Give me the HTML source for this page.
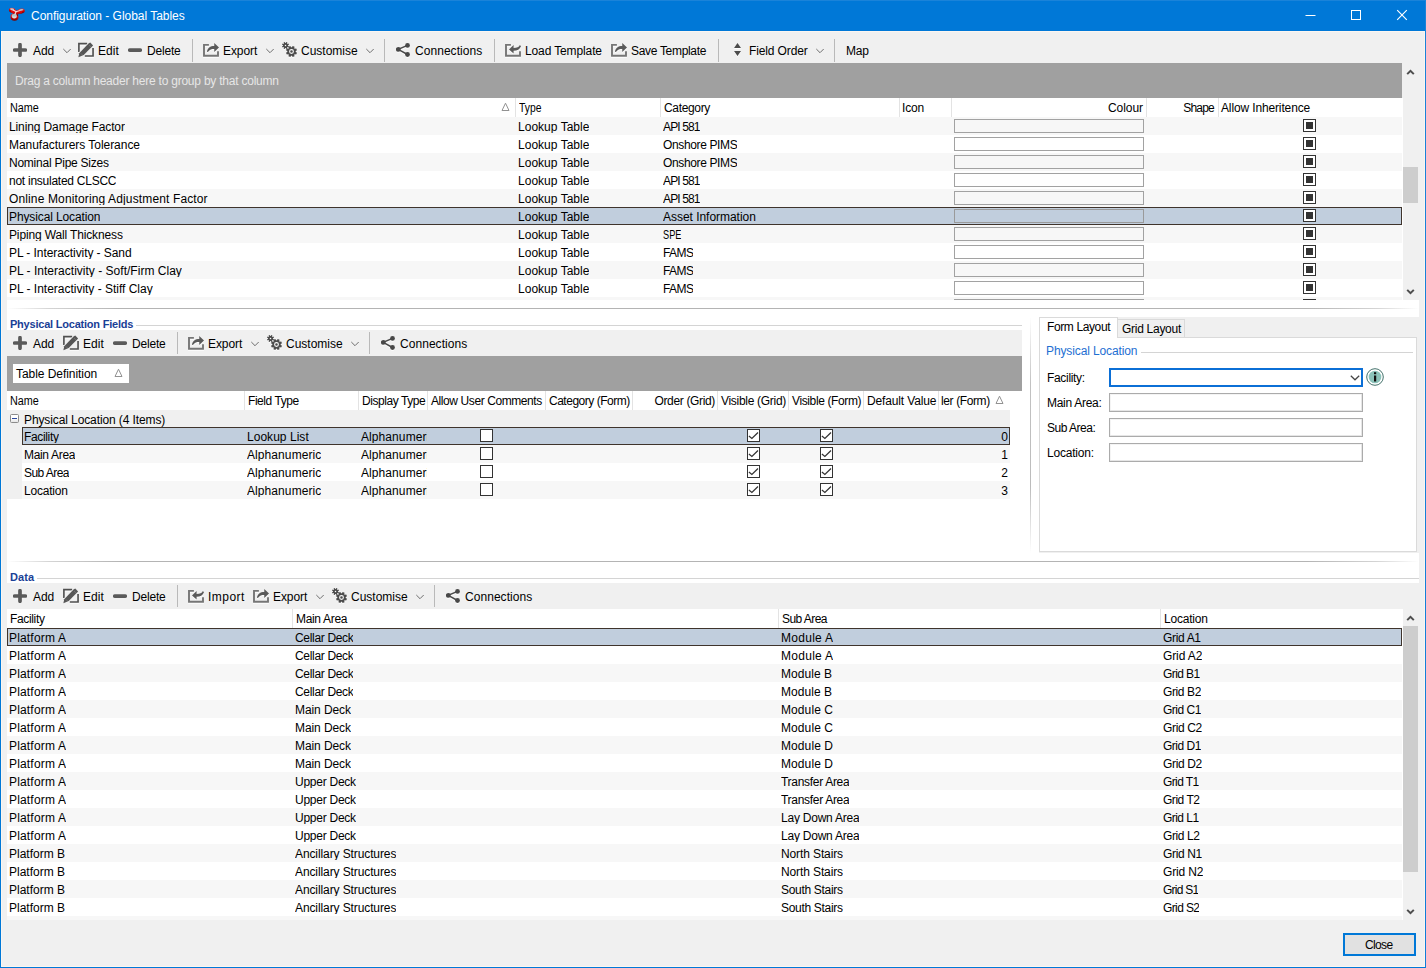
<!DOCTYPE html><html><head><meta charset="utf-8"><title>Configuration - Global Tables</title><style>
*{box-sizing:border-box;margin:0;padding:0}
html,body{width:1426px;height:968px;overflow:hidden}
body{position:relative;background:#f0f0f0;font-family:"Liberation Sans",sans-serif;font-size:12px;color:#000;line-height:18px}
.a{position:absolute}
.t{position:absolute;white-space:nowrap;height:18px;line-height:18px}
.w{color:#fff}
.c{height:15px;overflow:hidden}
.row{position:absolute;left:0;height:18px}
.alt{background:#f7f7f7}
.wh{background:#fff}
.sel{background:#c1cedd;border:1px solid #3f342c}
.vsep{position:absolute;width:1px;background:#e3e3e3}
.tsep{position:absolute;width:1px;background:#b9b9b9}
.sec{color:#1a4096;font-weight:bold;font-size:11px}
.ic{position:absolute}
</style></head><body>
<div class="a" style="left:0px;top:0px;width:1426px;height:31px;background:#0078d7"></div>
<div class="a" style="left:0px;top:31px;width:1px;height:937px;background:#0078d7"></div>
<div class="a" style="left:1425px;top:31px;width:1px;height:937px;background:#0078d7"></div>
<div class="a" style="left:0px;top:967px;width:1426px;height:1px;background:#0078d7"></div>
<div class="a" style="left:1px;top:31px;width:1424px;height:936px;border:1px solid #fbf6f1"></div>
<div class="a" style="left:0px;top:0px;width:1426px;height:1px;background:#1a83d9"></div>
<div class="a" style="left:1425px;top:0px;width:1px;height:968px;background:linear-gradient(180deg,#1a83d9 0,#0f7dd8 100%)"></div>
<svg class="ic" style="left:8px;top:7px" width="18" height="15" viewBox="0 0 18 15"><defs><linearGradient id="rd" x1="0" y1="0" x2="0" y2="1"><stop offset="0" stop-color="#ff1a1a"/><stop offset="0.450" stop-color="#e00808"/><stop offset="1" stop-color="#6d0000"/></linearGradient><linearGradient id="gy" x1="0" y1="0" x2="0" y2="1"><stop offset="0" stop-color="#9fb0b6"/><stop offset="1" stop-color="#e4e9ea"/></linearGradient></defs><g fill="url(#rd)" stroke="none"><ellipse cx="4.200" cy="3.400" rx="3.300" ry="2.500" transform="rotate(14 4.200 3.400)"/><ellipse cx="13.300" cy="4.100" rx="3.500" ry="2.450" transform="rotate(-8 13.300 4.100)"/><ellipse cx="6.500" cy="10.100" rx="3.950" ry="3.750"/><path d="M3.500 2.200L8.500 3.600L13.500 2.600L14 6.200L10.300 7L9.800 9L4 8.500L5.500 6.400L3 5.400Z"/></g><ellipse cx="4" cy="2.300" rx="2.100" ry="1" fill="#c3ccd0" transform="rotate(14 4 2.300)"/><ellipse cx="13.300" cy="2.900" rx="2.200" ry="0.950" fill="#b4bfc4" transform="rotate(-8 13.300 2.900)"/><ellipse cx="6.300" cy="9.100" rx="2.600" ry="2.350" fill="url(#gy)"/><path d="M5.500 3.200L8.100 4.700L11.300 3.700M8.100 4.700L7 7.200" stroke="#f6dada" stroke-width="1.200" stroke-linecap="round" fill="none"/></svg>
<div class="t w" style="left:31px;top:7px;letter-spacing:-0.029px;">Configuration - Global Tables</div>
<svg class="ic" style="left:1300px;top:5px" width="120" height="22" viewBox="0 0 120 22"><path d="M5.500 10.500h10" stroke="#fff" stroke-width="1"/><rect x="51.500" y="5.500" width="9" height="9" fill="none" stroke="#fff" stroke-width="1"/><path d="M97.200 5.200l9.600 9.600M106.800 5.200l-9.600 9.600" stroke="#fff" stroke-width="1.150"/></svg>
<svg class="ic" style="left:13px;top:43px" width="14" height="14" viewBox="0 0 14 14"><path d="M7 1.700v10.600M1.700 7h10.600" stroke="#5a5a5a" stroke-width="3.700" stroke-linecap="round" fill="none"/></svg>
<div class="t " style="left:33px;top:42px;letter-spacing:-0.122px;">Add</div>
<svg class="ic" style="left:63px;top:48px" width="8" height="6" viewBox="0 0 8 6"><path d="M0.300 1L4 4.700L7.700 1" stroke="#6e6e6e" stroke-width="1" fill="none"/></svg>
<svg class="ic" style="left:78px;top:42px" width="17" height="17" viewBox="0 0 17 17"><path d="M9.200 2.600H0.900V10.600M6.800 15H15.050V7.300" stroke="#fff" stroke-width="1.600" fill="none" opacity="0.900"/><path d="M9.200 1.600H0.900V10M6.800 14H15.050V6" stroke="#505050" stroke-width="1.650" fill="none"/><path d="M10.800 1.300L12.300 0.500L15.100 3.600L5.700 12.900L0.400 15.150L1.200 11.200Z" fill="#565656" stroke="#f0f0f0" stroke-width="1.500" paint-order="stroke"/><path d="M11 3.100L12.900 4.900M2.900 11.400L4.500 13" stroke="#8c8c8c" stroke-width="0.500"/></svg>
<div class="t " style="left:98px;top:42px;letter-spacing:0.043px;">Edit</div>
<svg class="ic" style="left:128px;top:43px" width="14" height="14" viewBox="0 0 14 14"><path d="M1.900 7.100h10.200" stroke="#5a5a5a" stroke-width="3.900" stroke-linecap="round" fill="none"/></svg>
<div class="t " style="left:147px;top:42px;letter-spacing:-0.178px;">Delete</div>
<div class="tsep" style="left:192px;top:39px;height:23px"></div>
<svg class="ic" style="left:203px;top:42px" width="17" height="17" viewBox="0 0 17 17"><g transform="translate(0,1)" opacity="0.900"><path d="M5.900 2.850H1V13.800H15V9.200" stroke="#fff" stroke-width="1.900" fill="none"/><path d="M11.250 0.900L16 5.400L11.250 10V6.900C8.600 6.900 6.800 7.400 4.900 9.900L4 9.700C4.600 5.800 7.200 4 11.250 4Z" fill="#fff"/></g><path d="M5.900 2.850H1V13.800H15V9.200" stroke="#767676" stroke-width="1.900" fill="none"/><path d="M11.250 0.900L16 5.400L11.250 10V6.900C8.600 6.900 6.800 7.400 4.900 9.900L4 9.700C4.600 5.800 7.200 4 11.250 4Z" fill="#5a5a5a"/></svg>
<div class="t " style="left:223px;top:42px;letter-spacing:-0.074px;">Export</div>
<svg class="ic" style="left:266px;top:48px" width="8" height="6" viewBox="0 0 8 6"><path d="M0.300 1L4 4.700L7.700 1" stroke="#6e6e6e" stroke-width="1" fill="none"/></svg>
<svg class="ic" style="left:282px;top:42px" width="16" height="17" viewBox="0 0 16 17"><g transform="translate(0,1)" opacity="0.900"><path fill-rule="evenodd" fill="#fff" d="M13.73 9.95L15.03 10.65L14.23 12.59L12.81 12.17L12.17 12.81L12.59 14.23L10.65 15.03L9.95 13.73L9.05 13.73L8.35 15.03L6.41 14.23L6.83 12.81L6.19 12.17L4.77 12.59L3.97 10.65L5.27 9.95L5.27 9.05L3.97 8.35L4.77 6.41L6.19 6.83L6.83 6.19L6.41 4.77L8.35 3.97L9.05 5.27L9.95 5.27L10.65 3.97L12.59 4.77L12.17 6.19L12.81 6.83L14.23 6.41L15.03 8.35L13.73 9.05ZM7.05 9.50a2.45 2.45 0 1 0 4.90 0a2.45 2.45 0 1 0 -4.90 0ZM8.20 9.50a1.30 1.30 0 1 0 2.60 0a1.30 1.30 0 1 0 -2.60 0Z"/><path fill-rule="evenodd" fill="#fff" d="M5.94 3.76L6.98 4.23L6.47 5.44L5.41 5.04L5.04 5.41L5.44 6.47L4.23 6.98L3.76 5.94L3.24 5.94L2.77 6.98L1.56 6.47L1.96 5.41L1.59 5.04L0.53 5.44L0.02 4.23L1.06 3.76L1.06 3.24L0.02 2.77L0.53 1.56L1.59 1.96L1.96 1.59L1.56 0.53L2.77 0.02L3.24 1.06L3.76 1.06L4.23 0.02L5.44 0.53L5.04 1.59L5.41 1.96L6.47 1.56L6.98 2.77L5.94 3.24ZM2.75 3.50a0.75 0.75 0 1 0 1.50 0a0.75 0.75 0 1 0 -1.50 0Z"/></g><path fill-rule="evenodd" fill="#4c4c4c" d="M13.73 9.95L15.03 10.65L14.23 12.59L12.81 12.17L12.17 12.81L12.59 14.23L10.65 15.03L9.95 13.73L9.05 13.73L8.35 15.03L6.41 14.23L6.83 12.81L6.19 12.17L4.77 12.59L3.97 10.65L5.27 9.95L5.27 9.05L3.97 8.35L4.77 6.41L6.19 6.83L6.83 6.19L6.41 4.77L8.35 3.97L9.05 5.27L9.95 5.27L10.65 3.97L12.59 4.77L12.17 6.19L12.81 6.83L14.23 6.41L15.03 8.35L13.73 9.05ZM7.05 9.50a2.45 2.45 0 1 0 4.90 0a2.45 2.45 0 1 0 -4.90 0ZM8.20 9.50a1.30 1.30 0 1 0 2.60 0a1.30 1.30 0 1 0 -2.60 0Z"/><path fill-rule="evenodd" fill="#4c4c4c" d="M5.94 3.76L6.98 4.23L6.47 5.44L5.41 5.04L5.04 5.41L5.44 6.47L4.23 6.98L3.76 5.94L3.24 5.94L2.77 6.98L1.56 6.47L1.96 5.41L1.59 5.04L0.53 5.44L0.02 4.23L1.06 3.76L1.06 3.24L0.02 2.77L0.53 1.56L1.59 1.96L1.96 1.59L1.56 0.53L2.77 0.02L3.24 1.06L3.76 1.06L4.23 0.02L5.44 0.53L5.04 1.59L5.41 1.96L6.47 1.56L6.98 2.77L5.94 3.24ZM2.75 3.50a0.75 0.75 0 1 0 1.50 0a0.75 0.75 0 1 0 -1.50 0Z"/></svg>
<div class="t " style="left:301px;top:42px;letter-spacing:0.002px;">Customise</div>
<svg class="ic" style="left:366px;top:48px" width="8" height="6" viewBox="0 0 8 6"><path d="M0.300 1L4 4.700L7.700 1" stroke="#6e6e6e" stroke-width="1" fill="none"/></svg>
<div class="tsep" style="left:384px;top:39px;height:23px"></div>
<svg class="ic" style="left:396px;top:43px" width="15" height="16" viewBox="0 0 15 16"><g transform="translate(0,1)" opacity="0.900"><path d="M11.500 2.400L2.200 6.400L11.500 11.500" stroke="#fff" stroke-width="1.450" fill="none"/><circle cx="11.500" cy="2.400" r="2.400" fill="#fff"/><circle cx="2.300" cy="6.400" r="2.400" fill="#fff"/><circle cx="11.500" cy="11.500" r="2.400" fill="#fff"/></g><path d="M11.500 2.400L2.200 6.400L11.500 11.500" stroke="#484848" stroke-width="1.450" fill="none"/><circle cx="11.500" cy="2.400" r="2.400" fill="#484848"/><circle cx="2.300" cy="6.400" r="2.400" fill="#484848"/><circle cx="11.500" cy="11.500" r="2.400" fill="#484848"/></svg>
<div class="t " style="left:415px;top:42px;letter-spacing:0.050px;">Connections</div>
<div class="tsep" style="left:494px;top:39px;height:23px"></div>
<svg class="ic" style="left:505px;top:42px" width="17" height="17" viewBox="0 0 17 17"><g transform="translate(0,1)" opacity="0.900"><path d="M5.900 2.850H1V13.800H15V9.200" stroke="#fff" stroke-width="1.900" fill="none"/><path d="M8.600 3L4 7.500L8.600 11.600V8.700C12.300 8.700 14.800 7.500 16 4.200L14.900 3.100C13.800 5.400 12 6.100 8.600 6.100Z" fill="#fff"/></g><path d="M5.900 2.850H1V13.800H15V9.200" stroke="#767676" stroke-width="1.900" fill="none"/><path d="M8.600 3L4 7.500L8.600 11.600V8.700C12.300 8.700 14.800 7.500 16 4.200L14.900 3.100C13.800 5.400 12 6.100 8.600 6.100Z" fill="#5a5a5a"/></svg>
<div class="t " style="left:525px;top:42px;letter-spacing:-0.124px;">Load Template</div>
<svg class="ic" style="left:611px;top:42px" width="17" height="17" viewBox="0 0 17 17"><g transform="translate(0,1)" opacity="0.900"><path d="M5.900 2.850H1V13.800H15V9.200" stroke="#fff" stroke-width="1.900" fill="none"/><path d="M11.250 0.900L16 5.400L11.250 10V6.900C8.600 6.900 6.800 7.400 4.900 9.900L4 9.700C4.600 5.800 7.200 4 11.250 4Z" fill="#fff"/></g><path d="M5.900 2.850H1V13.800H15V9.200" stroke="#767676" stroke-width="1.900" fill="none"/><path d="M11.250 0.900L16 5.400L11.250 10V6.900C8.600 6.900 6.800 7.400 4.900 9.900L4 9.700C4.600 5.800 7.200 4 11.250 4Z" fill="#5a5a5a"/></svg>
<div class="t " style="left:631px;top:42px;letter-spacing:-0.312px;">Save Template</div>
<div class="tsep" style="left:718px;top:39px;height:23px"></div>
<svg class="ic" style="left:733px;top:42px" width="9" height="16" viewBox="0 0 9 16"><g transform="translate(0,1)" opacity="0.900"><path d="M4.500 0.900L8 5.950H1.050ZM4.500 13.900L8 8.950H1.050Z" fill="#fff"/></g><path d="M4.500 0.900L8 5.950H1.050ZM4.500 13.900L8 8.950H1.050Z" fill="#4c4c4c"/></svg>
<div class="t " style="left:749px;top:42px;letter-spacing:-0.122px;">Field Order</div>
<svg class="ic" style="left:816px;top:48px" width="8" height="6" viewBox="0 0 8 6"><path d="M0.300 1L4 4.700L7.700 1" stroke="#6e6e6e" stroke-width="1" fill="none"/></svg>
<div class="tsep" style="left:834px;top:39px;height:23px"></div>
<div class="t " style="left:846px;top:42px;letter-spacing:-0.272px;">Map</div>
<div class="a" style="left:7px;top:63px;width:1395px;height:35px;background:#a0a0a0"></div>
<div class="t " style="left:15px;top:72px;letter-spacing:-0.226px;color:#e6e6e6">Drag a column header here to group by that column</div>
<div class="a" style="left:7px;top:98px;width:1396px;height:202px;background:#fff"></div>
<div class="vsep" style="left:515px;top:98px;height:19px"></div>
<div class="vsep" style="left:660px;top:98px;height:19px"></div>
<div class="vsep" style="left:899px;top:98px;height:19px"></div>
<div class="vsep" style="left:951px;top:98px;height:19px"></div>
<div class="vsep" style="left:1146px;top:98px;height:19px"></div>
<div class="vsep" style="left:1218px;top:98px;height:19px"></div>
<svg class="ic" style="left:501px;top:102px" width="9" height="10" viewBox="0 0 9 10"><path d="M4.500 1.200L8 8.500H1z" fill="none" stroke="#929292" stroke-width="1"/></svg>
<div class="t " style="left:10px;top:99px;transform:scaleX(0.900);transform-origin:0 0;">Name</div>
<div class="t " style="left:519px;top:99px;transform:scaleX(0.862);transform-origin:0 0;">Type</div>
<div class="t " style="left:664px;top:99px;letter-spacing:-0.341px;">Category</div>
<div class="t " style="left:902px;top:99px;letter-spacing:-0.191px;">Icon</div>
<div class="t " style="right:283px;top:99px;letter-spacing:-0.052px;">Colour</div>
<div class="t " style="right:212px;top:99px;letter-spacing:-0.772px;">Shape</div>
<div class="t " style="left:1221px;top:99px;letter-spacing:-0.136px;">Allow Inheritence</div>
<div class="row alt" style="left:7px;top:117px;width:1395px"></div>
<div class="t c" style="left:9px;top:118px;letter-spacing:-0.113px;">Lining Damage Factor</div>
<div class="t c" style="left:518px;top:118px;letter-spacing:0.022px;">Lookup Table</div>
<div class="t c" style="left:663px;top:118px;letter-spacing:-0.862px;">API 581</div>
<div class="a" style="left:954px;top:119px;width:190px;height:14px;border:1px solid #a2a2a2;background:#f7f7f7"></div>
<div class="a" style="left:1303px;top:119px;width:13px;height:13px;border:1px solid #333;background:#fff"><div class="a" style="left:2px;top:2px;width:7px;height:7px;background:#333"></div></div>
<div class="row wh" style="left:7px;top:135px;width:1395px"></div>
<div class="t c" style="left:9px;top:136px;letter-spacing:-0.038px;">Manufacturers Tolerance</div>
<div class="t c" style="left:518px;top:136px;letter-spacing:0.022px;">Lookup Table</div>
<div class="t c" style="left:663px;top:136px;letter-spacing:-0.361px;">Onshore PIMS</div>
<div class="a" style="left:954px;top:137px;width:190px;height:14px;border:1px solid #a2a2a2;background:#fff"></div>
<div class="a" style="left:1303px;top:137px;width:13px;height:13px;border:1px solid #333;background:#fff"><div class="a" style="left:2px;top:2px;width:7px;height:7px;background:#333"></div></div>
<div class="row alt" style="left:7px;top:153px;width:1395px"></div>
<div class="t c" style="left:9px;top:154px;letter-spacing:-0.238px;">Nominal Pipe Sizes</div>
<div class="t c" style="left:518px;top:154px;letter-spacing:0.022px;">Lookup Table</div>
<div class="t c" style="left:663px;top:154px;letter-spacing:-0.361px;">Onshore PIMS</div>
<div class="a" style="left:954px;top:155px;width:190px;height:14px;border:1px solid #a2a2a2;background:#f7f7f7"></div>
<div class="a" style="left:1303px;top:155px;width:13px;height:13px;border:1px solid #333;background:#fff"><div class="a" style="left:2px;top:2px;width:7px;height:7px;background:#333"></div></div>
<div class="row wh" style="left:7px;top:171px;width:1395px"></div>
<div class="t c" style="left:9px;top:172px;letter-spacing:-0.253px;">not insulated CLSCC</div>
<div class="t c" style="left:518px;top:172px;letter-spacing:0.022px;">Lookup Table</div>
<div class="t c" style="left:663px;top:172px;letter-spacing:-0.862px;">API 581</div>
<div class="a" style="left:954px;top:173px;width:190px;height:14px;border:1px solid #a2a2a2;background:#fff"></div>
<div class="a" style="left:1303px;top:173px;width:13px;height:13px;border:1px solid #333;background:#fff"><div class="a" style="left:2px;top:2px;width:7px;height:7px;background:#333"></div></div>
<div class="row alt" style="left:7px;top:189px;width:1395px"></div>
<div class="t c" style="left:9px;top:190px;letter-spacing:0.133px;">Online Monitoring Adjustment Factor</div>
<div class="t c" style="left:518px;top:190px;letter-spacing:0.022px;">Lookup Table</div>
<div class="t c" style="left:663px;top:190px;letter-spacing:-0.862px;">API 581</div>
<div class="a" style="left:954px;top:191px;width:190px;height:14px;border:1px solid #a2a2a2;background:#f7f7f7"></div>
<div class="a" style="left:1303px;top:191px;width:13px;height:13px;border:1px solid #333;background:#fff"><div class="a" style="left:2px;top:2px;width:7px;height:7px;background:#333"></div></div>
<div class="row sel" style="left:7px;top:207px;width:1395px"></div>
<div class="t c" style="left:9px;top:208px;letter-spacing:-0.117px;">Physical Location</div>
<div class="t c" style="left:518px;top:208px;letter-spacing:0.022px;">Lookup Table</div>
<div class="t c" style="left:663px;top:208px;letter-spacing:-0.034px;">Asset Information</div>
<div class="a" style="left:954px;top:209px;width:190px;height:14px;border:1px solid #9a9a9a;background:#c1cedd"></div>
<div class="a" style="left:1303px;top:209px;width:13px;height:13px;border:1px solid #333;background:#fff"><div class="a" style="left:2px;top:2px;width:7px;height:7px;background:#333"></div></div>
<div class="row alt" style="left:7px;top:225px;width:1395px"></div>
<div class="t c" style="left:9px;top:226px;letter-spacing:-0.141px;">Piping Wall Thickness</div>
<div class="t c" style="left:518px;top:226px;letter-spacing:0.022px;">Lookup Table</div>
<div class="t c" style="left:663px;top:226px;transform:scaleX(0.767);transform-origin:0 0;">SPE</div>
<div class="a" style="left:954px;top:227px;width:190px;height:14px;border:1px solid #a2a2a2;background:#f7f7f7"></div>
<div class="a" style="left:1303px;top:227px;width:13px;height:13px;border:1px solid #333;background:#fff"><div class="a" style="left:2px;top:2px;width:7px;height:7px;background:#333"></div></div>
<div class="row wh" style="left:7px;top:243px;width:1395px"></div>
<div class="t c" style="left:9px;top:244px;letter-spacing:-0.068px;">PL - Interactivity - Sand</div>
<div class="t c" style="left:518px;top:244px;letter-spacing:0.022px;">Lookup Table</div>
<div class="t c" style="left:663px;top:244px;letter-spacing:-0.591px;">FAMS</div>
<div class="a" style="left:954px;top:245px;width:190px;height:14px;border:1px solid #a2a2a2;background:#fff"></div>
<div class="a" style="left:1303px;top:245px;width:13px;height:13px;border:1px solid #333;background:#fff"><div class="a" style="left:2px;top:2px;width:7px;height:7px;background:#333"></div></div>
<div class="row alt" style="left:7px;top:261px;width:1395px"></div>
<div class="t c" style="left:9px;top:262px;letter-spacing:0.017px;">PL - Interactivity - Soft/Firm Clay</div>
<div class="t c" style="left:518px;top:262px;letter-spacing:0.022px;">Lookup Table</div>
<div class="t c" style="left:663px;top:262px;letter-spacing:-0.591px;">FAMS</div>
<div class="a" style="left:954px;top:263px;width:190px;height:14px;border:1px solid #a2a2a2;background:#f7f7f7"></div>
<div class="a" style="left:1303px;top:263px;width:13px;height:13px;border:1px solid #333;background:#fff"><div class="a" style="left:2px;top:2px;width:7px;height:7px;background:#333"></div></div>
<div class="row wh" style="left:7px;top:279px;width:1395px"></div>
<div class="t c" style="left:9px;top:280px;letter-spacing:-0.013px;">PL - Interactivity - Stiff Clay</div>
<div class="t c" style="left:518px;top:280px;letter-spacing:0.022px;">Lookup Table</div>
<div class="t c" style="left:663px;top:280px;letter-spacing:-0.591px;">FAMS</div>
<div class="a" style="left:954px;top:281px;width:190px;height:14px;border:1px solid #a2a2a2;background:#fff"></div>
<div class="a" style="left:1303px;top:281px;width:13px;height:13px;border:1px solid #333;background:#fff"><div class="a" style="left:2px;top:2px;width:7px;height:7px;background:#333"></div></div>
<div class="a" style="left:7px;top:297px;width:1396px;height:3px;background:#fff"></div>
<div class="a" style="left:7px;top:297px;width:1395px;height:3px;background:#f7f7f7"></div>
<div class="a" style="left:954px;top:299px;width:190px;height:1px;background:#a2a2a2"></div>
<div class="a" style="left:1303px;top:299px;width:13px;height:1px;background:#333"></div>
<div class="a" style="left:1403px;top:167px;width:15px;height:36px;background:#cdcdcd"></div>
<svg class="ic" style="left:1406px;top:69px" width="9" height="6" viewBox="0 0 9 6"><path d="M1.200 5.100L4.500 1.800L7.800 5.100" stroke="#4d4d4d" stroke-width="2" fill="none"/></svg>
<svg class="ic" style="left:1406px;top:289px" width="9" height="6" viewBox="0 0 9 6"><path d="M1.200 0.900L4.500 4.200L7.800 0.900" stroke="#4d4d4d" stroke-width="2" fill="none"/></svg>
<div class="a" style="left:7px;top:300px;width:1412px;height:17px;background:#fff"></div>
<div class="a" style="left:7px;top:317px;width:1033px;height:236px;background:#fff"></div>
<div class="a" style="left:7px;top:553px;width:1412px;height:30px;background:#fff"></div>
<div class="a" style="left:7px;top:308px;width:1412px;height:1px;background:linear-gradient(90deg,#fff 0,#d4d4d4 3%,#b4b4b4 8%,#b4b4b4 92%,#d4d4d4 97%,#fff 100%)"></div>
<div class="a" style="left:7px;top:561px;width:1412px;height:1px;background:linear-gradient(90deg,#fff 0,#d4d4d4 3%,#b4b4b4 8%,#b4b4b4 92%,#d4d4d4 97%,#fff 100%)"></div>
<div class="t sec" style="left:10px;top:315px;letter-spacing:-0.216px;z-index:3">Physical Location Fields</div>
<div class="a" style="left:136px;top:325px;width:886px;height:1px;background:#d4d4d4"></div>
<div class="a" style="left:7px;top:330px;width:1015px;height:26px;background:#f0f0f0"></div>
<svg class="ic" style="left:13px;top:336px" width="14" height="14" viewBox="0 0 14 14"><path d="M7 1.700v10.600M1.700 7h10.600" stroke="#5a5a5a" stroke-width="3.700" stroke-linecap="round" fill="none"/></svg>
<div class="t " style="left:33px;top:335px;letter-spacing:-0.122px;">Add</div>
<svg class="ic" style="left:63px;top:335px" width="17" height="17" viewBox="0 0 17 17"><path d="M9.200 2.600H0.900V10.600M6.800 15H15.050V7.300" stroke="#fff" stroke-width="1.600" fill="none" opacity="0.900"/><path d="M9.200 1.600H0.900V10M6.800 14H15.050V6" stroke="#505050" stroke-width="1.650" fill="none"/><path d="M10.800 1.300L12.300 0.500L15.100 3.600L5.700 12.900L0.400 15.150L1.200 11.200Z" fill="#565656" stroke="#f0f0f0" stroke-width="1.500" paint-order="stroke"/><path d="M11 3.100L12.900 4.900M2.900 11.400L4.500 13" stroke="#8c8c8c" stroke-width="0.500"/></svg>
<div class="t " style="left:83px;top:335px;letter-spacing:0.043px;">Edit</div>
<svg class="ic" style="left:113px;top:336px" width="14" height="14" viewBox="0 0 14 14"><path d="M1.900 7.100h10.200" stroke="#5a5a5a" stroke-width="3.900" stroke-linecap="round" fill="none"/></svg>
<div class="t " style="left:132px;top:335px;letter-spacing:-0.178px;">Delete</div>
<div class="tsep" style="left:177px;top:332px;height:22px"></div>
<svg class="ic" style="left:188px;top:335px" width="17" height="17" viewBox="0 0 17 17"><g transform="translate(0,1)" opacity="0.900"><path d="M5.900 2.850H1V13.800H15V9.200" stroke="#fff" stroke-width="1.900" fill="none"/><path d="M11.250 0.900L16 5.400L11.250 10V6.900C8.600 6.900 6.800 7.400 4.900 9.900L4 9.700C4.600 5.800 7.200 4 11.250 4Z" fill="#fff"/></g><path d="M5.900 2.850H1V13.800H15V9.200" stroke="#767676" stroke-width="1.900" fill="none"/><path d="M11.250 0.900L16 5.400L11.250 10V6.900C8.600 6.900 6.800 7.400 4.900 9.900L4 9.700C4.600 5.800 7.200 4 11.250 4Z" fill="#5a5a5a"/></svg>
<div class="t " style="left:208px;top:335px;letter-spacing:-0.074px;">Export</div>
<svg class="ic" style="left:251px;top:341px" width="8" height="6" viewBox="0 0 8 6"><path d="M0.300 1L4 4.700L7.700 1" stroke="#6e6e6e" stroke-width="1" fill="none"/></svg>
<svg class="ic" style="left:267px;top:335px" width="16" height="17" viewBox="0 0 16 17"><g transform="translate(0,1)" opacity="0.900"><path fill-rule="evenodd" fill="#fff" d="M13.73 9.95L15.03 10.65L14.23 12.59L12.81 12.17L12.17 12.81L12.59 14.23L10.65 15.03L9.95 13.73L9.05 13.73L8.35 15.03L6.41 14.23L6.83 12.81L6.19 12.17L4.77 12.59L3.97 10.65L5.27 9.95L5.27 9.05L3.97 8.35L4.77 6.41L6.19 6.83L6.83 6.19L6.41 4.77L8.35 3.97L9.05 5.27L9.95 5.27L10.65 3.97L12.59 4.77L12.17 6.19L12.81 6.83L14.23 6.41L15.03 8.35L13.73 9.05ZM7.05 9.50a2.45 2.45 0 1 0 4.90 0a2.45 2.45 0 1 0 -4.90 0ZM8.20 9.50a1.30 1.30 0 1 0 2.60 0a1.30 1.30 0 1 0 -2.60 0Z"/><path fill-rule="evenodd" fill="#fff" d="M5.94 3.76L6.98 4.23L6.47 5.44L5.41 5.04L5.04 5.41L5.44 6.47L4.23 6.98L3.76 5.94L3.24 5.94L2.77 6.98L1.56 6.47L1.96 5.41L1.59 5.04L0.53 5.44L0.02 4.23L1.06 3.76L1.06 3.24L0.02 2.77L0.53 1.56L1.59 1.96L1.96 1.59L1.56 0.53L2.77 0.02L3.24 1.06L3.76 1.06L4.23 0.02L5.44 0.53L5.04 1.59L5.41 1.96L6.47 1.56L6.98 2.77L5.94 3.24ZM2.75 3.50a0.75 0.75 0 1 0 1.50 0a0.75 0.75 0 1 0 -1.50 0Z"/></g><path fill-rule="evenodd" fill="#4c4c4c" d="M13.73 9.95L15.03 10.65L14.23 12.59L12.81 12.17L12.17 12.81L12.59 14.23L10.65 15.03L9.95 13.73L9.05 13.73L8.35 15.03L6.41 14.23L6.83 12.81L6.19 12.17L4.77 12.59L3.97 10.65L5.27 9.95L5.27 9.05L3.97 8.35L4.77 6.41L6.19 6.83L6.83 6.19L6.41 4.77L8.35 3.97L9.05 5.27L9.95 5.27L10.65 3.97L12.59 4.77L12.17 6.19L12.81 6.83L14.23 6.41L15.03 8.35L13.73 9.05ZM7.05 9.50a2.45 2.45 0 1 0 4.90 0a2.45 2.45 0 1 0 -4.90 0ZM8.20 9.50a1.30 1.30 0 1 0 2.60 0a1.30 1.30 0 1 0 -2.60 0Z"/><path fill-rule="evenodd" fill="#4c4c4c" d="M5.94 3.76L6.98 4.23L6.47 5.44L5.41 5.04L5.04 5.41L5.44 6.47L4.23 6.98L3.76 5.94L3.24 5.94L2.77 6.98L1.56 6.47L1.96 5.41L1.59 5.04L0.53 5.44L0.02 4.23L1.06 3.76L1.06 3.24L0.02 2.77L0.53 1.56L1.59 1.96L1.96 1.59L1.56 0.53L2.77 0.02L3.24 1.06L3.76 1.06L4.23 0.02L5.44 0.53L5.04 1.59L5.41 1.96L6.47 1.56L6.98 2.77L5.94 3.24ZM2.75 3.50a0.75 0.75 0 1 0 1.50 0a0.75 0.75 0 1 0 -1.50 0Z"/></svg>
<div class="t " style="left:286px;top:335px;letter-spacing:0.002px;">Customise</div>
<svg class="ic" style="left:351px;top:341px" width="8" height="6" viewBox="0 0 8 6"><path d="M0.300 1L4 4.700L7.700 1" stroke="#6e6e6e" stroke-width="1" fill="none"/></svg>
<div class="tsep" style="left:369px;top:332px;height:22px"></div>
<svg class="ic" style="left:381px;top:336px" width="15" height="16" viewBox="0 0 15 16"><g transform="translate(0,1)" opacity="0.900"><path d="M11.500 2.400L2.200 6.400L11.500 11.500" stroke="#fff" stroke-width="1.450" fill="none"/><circle cx="11.500" cy="2.400" r="2.400" fill="#fff"/><circle cx="2.300" cy="6.400" r="2.400" fill="#fff"/><circle cx="11.500" cy="11.500" r="2.400" fill="#fff"/></g><path d="M11.500 2.400L2.200 6.400L11.500 11.500" stroke="#484848" stroke-width="1.450" fill="none"/><circle cx="11.500" cy="2.400" r="2.400" fill="#484848"/><circle cx="2.300" cy="6.400" r="2.400" fill="#484848"/><circle cx="11.500" cy="11.500" r="2.400" fill="#484848"/></svg>
<div class="t " style="left:400px;top:335px;letter-spacing:0.050px;">Connections</div>
<div class="a" style="left:7px;top:356px;width:1015px;height:35px;background:#a0a0a0"></div>
<div class="a" style="left:13px;top:364px;width:116px;height:19px;background:#fff"></div>
<div class="t " style="left:16px;top:365px;letter-spacing:-0.053px;line-height:19px;height:19px;">Table Definition</div>
<svg class="ic" style="left:114px;top:368px" width="9" height="10" viewBox="0 0 9 10"><path d="M4.500 1.200L8 8.500H1z" fill="none" stroke="#929292" stroke-width="1"/></svg>
<div class="a" style="left:7px;top:391px;width:1015px;height:19px;background:#fff"></div>
<div class="vsep" style="left:244px;top:391px;height:19px"></div>
<div class="vsep" style="left:358px;top:391px;height:19px"></div>
<div class="vsep" style="left:427px;top:391px;height:19px"></div>
<div class="vsep" style="left:545px;top:391px;height:19px"></div>
<div class="vsep" style="left:632px;top:391px;height:19px"></div>
<div class="vsep" style="left:717px;top:391px;height:19px"></div>
<div class="vsep" style="left:788px;top:391px;height:19px"></div>
<div class="vsep" style="left:863px;top:391px;height:19px"></div>
<div class="vsep" style="left:938px;top:391px;height:19px"></div>
<div class="t " style="left:10px;top:392px;transform:scaleX(0.900);transform-origin:0 0;">Name</div>
<div class="t " style="left:248px;top:392px;letter-spacing:-0.449px;">Field Type</div>
<div class="t " style="left:362px;top:392px;letter-spacing:-0.435px;">Display Type</div>
<div class="t " style="left:431px;top:392px;letter-spacing:-0.411px;">Allow User Comments</div>
<div class="t " style="left:549px;top:392px;letter-spacing:-0.487px;">Category (Form)</div>
<div class="t " style="right:711px;top:392px;letter-spacing:-0.343px;">Order (Grid)</div>
<div class="t " style="left:721px;top:392px;letter-spacing:-0.295px;">Visible (Grid)</div>
<div class="t " style="left:792px;top:392px;letter-spacing:-0.382px;">Visible (Form)</div>
<div class="t " style="left:867px;top:392px;letter-spacing:-0.137px;">Default Value</div>
<div class="t " style="left:941px;top:392px;letter-spacing:-0.386px;">ler (Form)</div>
<svg class="ic" style="left:995px;top:395px" width="9" height="10" viewBox="0 0 9 10"><path d="M4.500 1.200L8 8.500H1z" fill="none" stroke="#929292" stroke-width="1"/></svg>
<div class="a" style="left:7px;top:410px;width:1003px;height:17px;background:#f0f0f0"></div>
<div class="a" style="left:10px;top:414px;width:9px;height:9px;border:1px solid #8c8c8c;border-radius:1.500px;background:linear-gradient(180deg,#fff 0,#fff 45%,#e6e6e6 100%)"><div class="a" style="left:1px;top:3px;width:5px;height:1px;background:#2b479e"></div></div>
<div class="t " style="left:24px;top:412px;letter-spacing:-0.105px;height:17px;line-height:17px">Physical Location (4 Items)</div>
<div class="a" style="left:7px;top:427px;width:15px;height:18px;background:#f0f0f0"></div>
<div class="row sel" style="left:22px;top:427px;width:988px"></div>
<div class="t c" style="left:24px;top:428px;letter-spacing:-0.349px;">Facility</div>
<div class="t c" style="left:247px;top:428px;letter-spacing:0.034px;">Lookup List</div>
<div class="t c" style="left:361px;top:428px;letter-spacing:0.084px;width:66px">Alphanumeric</div>
<div class="a" style="left:480px;top:429px;width:13px;height:13px;border:1px solid #333;background:#fff"></div>
<div class="a" style="left:747px;top:429px;width:13px;height:13px;border:1px solid #333;background:#fff"></div>
<svg class="ic" style="left:747px;top:429px" width="13" height="13" viewBox="0 0 13 13"><path d="M1.900 6.900L4.900 9.400L11 3.500" stroke="#333" stroke-width="1.250" fill="none"/></svg>
<div class="a" style="left:820px;top:429px;width:13px;height:13px;border:1px solid #333;background:#fff"></div>
<svg class="ic" style="left:820px;top:429px" width="13" height="13" viewBox="0 0 13 13"><path d="M1.900 6.900L4.900 9.400L11 3.500" stroke="#333" stroke-width="1.250" fill="none"/></svg>
<div class="t " style="right:418px;top:428px;">0</div>
<div class="a" style="left:7px;top:445px;width:15px;height:18px;background:#f0f0f0"></div>
<div class="row alt" style="left:22px;top:445px;width:988px"></div>
<div class="t c" style="left:24px;top:446px;letter-spacing:-0.329px;">Main Area</div>
<div class="t c" style="left:247px;top:446px;letter-spacing:0.084px;">Alphanumeric</div>
<div class="t c" style="left:361px;top:446px;letter-spacing:0.084px;width:66px">Alphanumeric</div>
<div class="a" style="left:480px;top:447px;width:13px;height:13px;border:1px solid #333;background:#fff"></div>
<div class="a" style="left:747px;top:447px;width:13px;height:13px;border:1px solid #333;background:#fff"></div>
<svg class="ic" style="left:747px;top:447px" width="13" height="13" viewBox="0 0 13 13"><path d="M1.900 6.900L4.900 9.400L11 3.500" stroke="#333" stroke-width="1.250" fill="none"/></svg>
<div class="a" style="left:820px;top:447px;width:13px;height:13px;border:1px solid #333;background:#fff"></div>
<svg class="ic" style="left:820px;top:447px" width="13" height="13" viewBox="0 0 13 13"><path d="M1.900 6.900L4.900 9.400L11 3.500" stroke="#333" stroke-width="1.250" fill="none"/></svg>
<div class="t " style="right:418px;top:446px;">1</div>
<div class="a" style="left:7px;top:463px;width:15px;height:18px;background:#f0f0f0"></div>
<div class="row wh" style="left:22px;top:463px;width:988px"></div>
<div class="t c" style="left:24px;top:464px;letter-spacing:-0.551px;">Sub Area</div>
<div class="t c" style="left:247px;top:464px;letter-spacing:0.084px;">Alphanumeric</div>
<div class="t c" style="left:361px;top:464px;letter-spacing:0.084px;width:66px">Alphanumeric</div>
<div class="a" style="left:480px;top:465px;width:13px;height:13px;border:1px solid #333;background:#fff"></div>
<div class="a" style="left:747px;top:465px;width:13px;height:13px;border:1px solid #333;background:#fff"></div>
<svg class="ic" style="left:747px;top:465px" width="13" height="13" viewBox="0 0 13 13"><path d="M1.900 6.900L4.900 9.400L11 3.500" stroke="#333" stroke-width="1.250" fill="none"/></svg>
<div class="a" style="left:820px;top:465px;width:13px;height:13px;border:1px solid #333;background:#fff"></div>
<svg class="ic" style="left:820px;top:465px" width="13" height="13" viewBox="0 0 13 13"><path d="M1.900 6.900L4.900 9.400L11 3.500" stroke="#333" stroke-width="1.250" fill="none"/></svg>
<div class="t " style="right:418px;top:464px;">2</div>
<div class="a" style="left:7px;top:481px;width:15px;height:18px;background:#f0f0f0"></div>
<div class="row alt" style="left:22px;top:481px;width:988px"></div>
<div class="t c" style="left:24px;top:482px;letter-spacing:-0.208px;">Location</div>
<div class="t c" style="left:247px;top:482px;letter-spacing:0.084px;">Alphanumeric</div>
<div class="t c" style="left:361px;top:482px;letter-spacing:0.084px;width:66px">Alphanumeric</div>
<div class="a" style="left:480px;top:483px;width:13px;height:13px;border:1px solid #333;background:#fff"></div>
<div class="a" style="left:747px;top:483px;width:13px;height:13px;border:1px solid #333;background:#fff"></div>
<svg class="ic" style="left:747px;top:483px" width="13" height="13" viewBox="0 0 13 13"><path d="M1.900 6.900L4.900 9.400L11 3.500" stroke="#333" stroke-width="1.250" fill="none"/></svg>
<div class="a" style="left:820px;top:483px;width:13px;height:13px;border:1px solid #333;background:#fff"></div>
<svg class="ic" style="left:820px;top:483px" width="13" height="13" viewBox="0 0 13 13"><path d="M1.900 6.900L4.900 9.400L11 3.500" stroke="#333" stroke-width="1.250" fill="none"/></svg>
<div class="t " style="right:418px;top:482px;">3</div>
<div class="a" style="left:1030px;top:317px;width:1px;height:236px;background:linear-gradient(180deg,#fff 0,#c2c2c2 28%,#bcbcbc 72%,#fff 100%)"></div>
<div class="a" style="left:1040px;top:317px;width:1379px;height:0px;"></div>
<div class="a" style="left:1039px;top:317px;width:380px;height:236px;background:#f0f0f0"></div>
<div class="a" style="left:1039px;top:337px;width:378px;height:215px;background:#fff;border:1px solid #dadada"></div>
<div class="a" style="left:1117px;top:319px;width:68px;height:19px;background:#f0f0f0;border:1px solid #dadada;border-left:none"></div>
<div class="a" style="left:1039px;top:317px;width:79px;height:21px;background:#fff;border:1px solid #dadada;border-bottom:none"></div>
<div class="t " style="left:1047px;top:318px;letter-spacing:-0.384px;">Form Layout</div>
<div class="t " style="left:1122px;top:320px;letter-spacing:-0.282px;">Grid Layout</div>
<div class="t " style="left:1046px;top:342px;letter-spacing:-0.117px;color:#1e6fd2;">Physical Location</div>
<div class="a" style="left:1141px;top:352px;width:272px;height:1px;background:#d4d4d4"></div>
<div class="t " style="left:1047px;top:369px;letter-spacing:-0.321px;">Facility:</div>
<div class="a" style="left:1109px;top:368px;width:254px;height:19px;background:#fff;border:2px solid #0b6fd6"></div>
<svg class="ic" style="left:1350px;top:375px" width="10" height="6" viewBox="0 0 10 6"><path d="M0.800 0.800L5 4.800L9.200 0.800" stroke="#444" stroke-width="1.200" fill="none"/></svg>
<div class="t " style="left:1047px;top:394px;letter-spacing:-0.284px;">Main Area:</div>
<div class="a" style="left:1109px;top:393px;width:254px;height:19px;background:#fff;border:1px solid #ababab;box-shadow:inset -1px -1px 0 #e6e6e6, inset 1px 1px 0 #f4f4f4"></div>
<div class="t " style="left:1047px;top:419px;letter-spacing:-0.498px;">Sub Area:</div>
<div class="a" style="left:1109px;top:418px;width:254px;height:19px;background:#fff;border:1px solid #ababab;box-shadow:inset -1px -1px 0 #e6e6e6, inset 1px 1px 0 #f4f4f4"></div>
<div class="t " style="left:1047px;top:444px;letter-spacing:-0.211px;">Location:</div>
<div class="a" style="left:1109px;top:443px;width:254px;height:19px;background:#fff;border:1px solid #ababab;box-shadow:inset -1px -1px 0 #e6e6e6, inset 1px 1px 0 #f4f4f4"></div>
<svg class="ic" style="left:1366px;top:368px" width="18" height="18" viewBox="0 0 18 18"><circle cx="9" cy="9" r="8.300" fill="#fff" stroke="#44726c" stroke-width="1"/><circle cx="9" cy="9" r="6.300" fill="#8cc3ba"/><rect x="8" y="7.500" width="2.200" height="6" fill="#111"/><rect x="8" y="4.200" width="2.200" height="2" fill="#111"/></svg>
<div class="t sec" style="left:10px;top:568px;letter-spacing:0.052px;z-index:3">Data</div>
<div class="a" style="left:37px;top:578px;width:1382px;height:1px;background:#d4d4d4"></div>
<svg class="ic" style="left:13px;top:589px" width="14" height="14" viewBox="0 0 14 14"><path d="M7 1.700v10.600M1.700 7h10.600" stroke="#5a5a5a" stroke-width="3.700" stroke-linecap="round" fill="none"/></svg>
<div class="t " style="left:33px;top:588px;letter-spacing:-0.122px;">Add</div>
<svg class="ic" style="left:63px;top:588px" width="17" height="17" viewBox="0 0 17 17"><path d="M9.200 2.600H0.900V10.600M6.800 15H15.050V7.300" stroke="#fff" stroke-width="1.600" fill="none" opacity="0.900"/><path d="M9.200 1.600H0.900V10M6.800 14H15.050V6" stroke="#505050" stroke-width="1.650" fill="none"/><path d="M10.800 1.300L12.300 0.500L15.100 3.600L5.700 12.900L0.400 15.150L1.200 11.200Z" fill="#565656" stroke="#f0f0f0" stroke-width="1.500" paint-order="stroke"/><path d="M11 3.100L12.900 4.900M2.900 11.400L4.500 13" stroke="#8c8c8c" stroke-width="0.500"/></svg>
<div class="t " style="left:83px;top:588px;letter-spacing:0.043px;">Edit</div>
<svg class="ic" style="left:113px;top:589px" width="14" height="14" viewBox="0 0 14 14"><path d="M1.900 7.100h10.200" stroke="#5a5a5a" stroke-width="3.900" stroke-linecap="round" fill="none"/></svg>
<div class="t " style="left:132px;top:588px;letter-spacing:-0.178px;">Delete</div>
<div class="tsep" style="left:177px;top:585px;height:22px"></div>
<svg class="ic" style="left:188px;top:588px" width="17" height="17" viewBox="0 0 17 17"><g transform="translate(0,1)" opacity="0.900"><path d="M5.900 2.850H1V13.800H15V9.200" stroke="#fff" stroke-width="1.900" fill="none"/><path d="M8.600 3L4 7.500L8.600 11.600V8.700C12.300 8.700 14.800 7.500 16 4.200L14.900 3.100C13.800 5.400 12 6.100 8.600 6.100Z" fill="#fff"/></g><path d="M5.900 2.850H1V13.800H15V9.200" stroke="#767676" stroke-width="1.900" fill="none"/><path d="M8.600 3L4 7.500L8.600 11.600V8.700C12.300 8.700 14.800 7.500 16 4.200L14.900 3.100C13.800 5.400 12 6.100 8.600 6.100Z" fill="#5a5a5a"/></svg>
<div class="t " style="left:208px;top:588px;letter-spacing:0.460px;">Import</div>
<svg class="ic" style="left:253px;top:588px" width="17" height="17" viewBox="0 0 17 17"><g transform="translate(0,1)" opacity="0.900"><path d="M5.900 2.850H1V13.800H15V9.200" stroke="#fff" stroke-width="1.900" fill="none"/><path d="M11.250 0.900L16 5.400L11.250 10V6.900C8.600 6.900 6.800 7.400 4.900 9.900L4 9.700C4.600 5.800 7.200 4 11.250 4Z" fill="#fff"/></g><path d="M5.900 2.850H1V13.800H15V9.200" stroke="#767676" stroke-width="1.900" fill="none"/><path d="M11.250 0.900L16 5.400L11.250 10V6.900C8.600 6.900 6.800 7.400 4.900 9.900L4 9.700C4.600 5.800 7.200 4 11.250 4Z" fill="#5a5a5a"/></svg>
<div class="t " style="left:273px;top:588px;letter-spacing:-0.074px;">Export</div>
<svg class="ic" style="left:316px;top:594px" width="8" height="6" viewBox="0 0 8 6"><path d="M0.300 1L4 4.700L7.700 1" stroke="#6e6e6e" stroke-width="1" fill="none"/></svg>
<svg class="ic" style="left:332px;top:588px" width="16" height="17" viewBox="0 0 16 17"><g transform="translate(0,1)" opacity="0.900"><path fill-rule="evenodd" fill="#fff" d="M13.73 9.95L15.03 10.65L14.23 12.59L12.81 12.17L12.17 12.81L12.59 14.23L10.65 15.03L9.95 13.73L9.05 13.73L8.35 15.03L6.41 14.23L6.83 12.81L6.19 12.17L4.77 12.59L3.97 10.65L5.27 9.95L5.27 9.05L3.97 8.35L4.77 6.41L6.19 6.83L6.83 6.19L6.41 4.77L8.35 3.97L9.05 5.27L9.95 5.27L10.65 3.97L12.59 4.77L12.17 6.19L12.81 6.83L14.23 6.41L15.03 8.35L13.73 9.05ZM7.05 9.50a2.45 2.45 0 1 0 4.90 0a2.45 2.45 0 1 0 -4.90 0ZM8.20 9.50a1.30 1.30 0 1 0 2.60 0a1.30 1.30 0 1 0 -2.60 0Z"/><path fill-rule="evenodd" fill="#fff" d="M5.94 3.76L6.98 4.23L6.47 5.44L5.41 5.04L5.04 5.41L5.44 6.47L4.23 6.98L3.76 5.94L3.24 5.94L2.77 6.98L1.56 6.47L1.96 5.41L1.59 5.04L0.53 5.44L0.02 4.23L1.06 3.76L1.06 3.24L0.02 2.77L0.53 1.56L1.59 1.96L1.96 1.59L1.56 0.53L2.77 0.02L3.24 1.06L3.76 1.06L4.23 0.02L5.44 0.53L5.04 1.59L5.41 1.96L6.47 1.56L6.98 2.77L5.94 3.24ZM2.75 3.50a0.75 0.75 0 1 0 1.50 0a0.75 0.75 0 1 0 -1.50 0Z"/></g><path fill-rule="evenodd" fill="#4c4c4c" d="M13.73 9.95L15.03 10.65L14.23 12.59L12.81 12.17L12.17 12.81L12.59 14.23L10.65 15.03L9.95 13.73L9.05 13.73L8.35 15.03L6.41 14.23L6.83 12.81L6.19 12.17L4.77 12.59L3.97 10.65L5.27 9.95L5.27 9.05L3.97 8.35L4.77 6.41L6.19 6.83L6.83 6.19L6.41 4.77L8.35 3.97L9.05 5.27L9.95 5.27L10.65 3.97L12.59 4.77L12.17 6.19L12.81 6.83L14.23 6.41L15.03 8.35L13.73 9.05ZM7.05 9.50a2.45 2.45 0 1 0 4.90 0a2.45 2.45 0 1 0 -4.90 0ZM8.20 9.50a1.30 1.30 0 1 0 2.60 0a1.30 1.30 0 1 0 -2.60 0Z"/><path fill-rule="evenodd" fill="#4c4c4c" d="M5.94 3.76L6.98 4.23L6.47 5.44L5.41 5.04L5.04 5.41L5.44 6.47L4.23 6.98L3.76 5.94L3.24 5.94L2.77 6.98L1.56 6.47L1.96 5.41L1.59 5.04L0.53 5.44L0.02 4.23L1.06 3.76L1.06 3.24L0.02 2.77L0.53 1.56L1.59 1.96L1.96 1.59L1.56 0.53L2.77 0.02L3.24 1.06L3.76 1.06L4.23 0.02L5.44 0.53L5.04 1.59L5.41 1.96L6.47 1.56L6.98 2.77L5.94 3.24ZM2.75 3.50a0.75 0.75 0 1 0 1.50 0a0.75 0.75 0 1 0 -1.50 0Z"/></svg>
<div class="t " style="left:351px;top:588px;letter-spacing:0.002px;">Customise</div>
<svg class="ic" style="left:416px;top:594px" width="8" height="6" viewBox="0 0 8 6"><path d="M0.300 1L4 4.700L7.700 1" stroke="#6e6e6e" stroke-width="1" fill="none"/></svg>
<div class="tsep" style="left:434px;top:585px;height:22px"></div>
<svg class="ic" style="left:446px;top:589px" width="15" height="16" viewBox="0 0 15 16"><g transform="translate(0,1)" opacity="0.900"><path d="M11.500 2.400L2.200 6.400L11.500 11.500" stroke="#fff" stroke-width="1.450" fill="none"/><circle cx="11.500" cy="2.400" r="2.400" fill="#fff"/><circle cx="2.300" cy="6.400" r="2.400" fill="#fff"/><circle cx="11.500" cy="11.500" r="2.400" fill="#fff"/></g><path d="M11.500 2.400L2.200 6.400L11.500 11.500" stroke="#484848" stroke-width="1.450" fill="none"/><circle cx="11.500" cy="2.400" r="2.400" fill="#484848"/><circle cx="2.300" cy="6.400" r="2.400" fill="#484848"/><circle cx="11.500" cy="11.500" r="2.400" fill="#484848"/></svg>
<div class="t " style="left:465px;top:588px;letter-spacing:0.050px;">Connections</div>
<div class="a" style="left:7px;top:609px;width:1396px;height:311px;background:#fff"></div>
<div class="vsep" style="left:292px;top:609px;height:19px"></div>
<div class="vsep" style="left:778px;top:609px;height:19px"></div>
<div class="vsep" style="left:1160px;top:609px;height:19px"></div>
<div class="t " style="left:10px;top:610px;letter-spacing:-0.349px;">Facility</div>
<div class="t " style="left:296px;top:610px;letter-spacing:-0.329px;">Main Area</div>
<div class="t " style="left:782px;top:610px;letter-spacing:-0.551px;">Sub Area</div>
<div class="t " style="left:1164px;top:610px;letter-spacing:-0.208px;">Location</div>
<div class="row sel" style="left:7px;top:628px;width:1395px"></div>
<div class="t c" style="left:9px;top:629px;letter-spacing:0.173px;">Platform A</div>
<div class="t c" style="left:295px;top:629px;letter-spacing:-0.323px;">Cellar Deck</div>
<div class="t c" style="left:781px;top:629px;letter-spacing:0.281px;">Module A</div>
<div class="t c" style="left:1163px;top:629px;letter-spacing:-0.336px;">Grid A1</div>
<div class="row wh" style="left:7px;top:646px;width:1395px"></div>
<div class="t c" style="left:9px;top:647px;letter-spacing:0.173px;">Platform A</div>
<div class="t c" style="left:295px;top:647px;letter-spacing:-0.323px;">Cellar Deck</div>
<div class="t c" style="left:781px;top:647px;letter-spacing:0.281px;">Module A</div>
<div class="t c" style="left:1163px;top:647px;letter-spacing:-0.119px;">Grid A2</div>
<div class="row alt" style="left:7px;top:664px;width:1395px"></div>
<div class="t c" style="left:9px;top:665px;letter-spacing:0.173px;">Platform A</div>
<div class="t c" style="left:295px;top:665px;letter-spacing:-0.323px;">Cellar Deck</div>
<div class="t c" style="left:781px;top:665px;letter-spacing:0.045px;">Module B</div>
<div class="t c" style="left:1163px;top:665px;letter-spacing:-0.595px;">Grid B1</div>
<div class="row wh" style="left:7px;top:682px;width:1395px"></div>
<div class="t c" style="left:9px;top:683px;letter-spacing:0.173px;">Platform A</div>
<div class="t c" style="left:295px;top:683px;letter-spacing:-0.323px;">Cellar Deck</div>
<div class="t c" style="left:781px;top:683px;letter-spacing:0.045px;">Module B</div>
<div class="t c" style="left:1163px;top:683px;letter-spacing:-0.395px;">Grid B2</div>
<div class="row alt" style="left:7px;top:700px;width:1395px"></div>
<div class="t c" style="left:9px;top:701px;letter-spacing:0.173px;">Platform A</div>
<div class="t c" style="left:295px;top:701px;letter-spacing:-0.086px;">Main Deck</div>
<div class="t c" style="left:781px;top:701px;letter-spacing:0.092px;">Module C</div>
<div class="t c" style="left:1163px;top:701px;letter-spacing:-0.507px;">Grid C1</div>
<div class="row wh" style="left:7px;top:718px;width:1395px"></div>
<div class="t c" style="left:9px;top:719px;letter-spacing:0.173px;">Platform A</div>
<div class="t c" style="left:295px;top:719px;letter-spacing:-0.086px;">Main Deck</div>
<div class="t c" style="left:781px;top:719px;letter-spacing:0.092px;">Module C</div>
<div class="t c" style="left:1163px;top:719px;letter-spacing:-0.341px;">Grid C2</div>
<div class="row alt" style="left:7px;top:736px;width:1395px"></div>
<div class="t c" style="left:9px;top:737px;letter-spacing:0.173px;">Platform A</div>
<div class="t c" style="left:295px;top:737px;letter-spacing:-0.086px;">Main Deck</div>
<div class="t c" style="left:781px;top:737px;letter-spacing:0.092px;">Module D</div>
<div class="t c" style="left:1163px;top:737px;letter-spacing:-0.507px;">Grid D1</div>
<div class="row wh" style="left:7px;top:754px;width:1395px"></div>
<div class="t c" style="left:9px;top:755px;letter-spacing:0.173px;">Platform A</div>
<div class="t c" style="left:295px;top:755px;letter-spacing:-0.086px;">Main Deck</div>
<div class="t c" style="left:781px;top:755px;letter-spacing:0.092px;">Module D</div>
<div class="t c" style="left:1163px;top:755px;letter-spacing:-0.341px;">Grid D2</div>
<div class="row alt" style="left:7px;top:772px;width:1395px"></div>
<div class="t c" style="left:9px;top:773px;letter-spacing:0.173px;">Platform A</div>
<div class="t c" style="left:295px;top:773px;letter-spacing:-0.251px;">Upper Deck</div>
<div class="t c" style="left:781px;top:773px;letter-spacing:-0.300px;">Transfer Area</div>
<div class="t c" style="left:1163px;top:773px;letter-spacing:-0.614px;">Grid T1</div>
<div class="row wh" style="left:7px;top:790px;width:1395px"></div>
<div class="t c" style="left:9px;top:791px;letter-spacing:0.173px;">Platform A</div>
<div class="t c" style="left:295px;top:791px;letter-spacing:-0.251px;">Upper Deck</div>
<div class="t c" style="left:781px;top:791px;letter-spacing:-0.300px;">Transfer Area</div>
<div class="t c" style="left:1163px;top:791px;letter-spacing:-0.464px;">Grid T2</div>
<div class="row alt" style="left:7px;top:808px;width:1395px"></div>
<div class="t c" style="left:9px;top:809px;letter-spacing:0.173px;">Platform A</div>
<div class="t c" style="left:295px;top:809px;letter-spacing:-0.251px;">Upper Deck</div>
<div class="t c" style="left:781px;top:809px;letter-spacing:-0.231px;">Lay Down Area</div>
<div class="t c" style="left:1163px;top:809px;letter-spacing:-0.541px;">Grid L1</div>
<div class="row wh" style="left:7px;top:826px;width:1395px"></div>
<div class="t c" style="left:9px;top:827px;letter-spacing:0.173px;">Platform A</div>
<div class="t c" style="left:295px;top:827px;letter-spacing:-0.251px;">Upper Deck</div>
<div class="t c" style="left:781px;top:827px;letter-spacing:-0.231px;">Lay Down Area</div>
<div class="t c" style="left:1163px;top:827px;letter-spacing:-0.391px;">Grid L2</div>
<div class="row alt" style="left:7px;top:844px;width:1395px"></div>
<div class="t c" style="left:9px;top:845px;letter-spacing:0.000px;">Platform B</div>
<div class="t c" style="left:295px;top:845px;letter-spacing:-0.103px;">Ancillary Structures</div>
<div class="t c" style="left:781px;top:845px;letter-spacing:-0.113px;">North Stairs</div>
<div class="t c" style="left:1163px;top:845px;letter-spacing:-0.341px;">Grid N1</div>
<div class="row wh" style="left:7px;top:862px;width:1395px"></div>
<div class="t c" style="left:9px;top:863px;letter-spacing:0.000px;">Platform B</div>
<div class="t c" style="left:295px;top:863px;letter-spacing:-0.103px;">Ancillary Structures</div>
<div class="t c" style="left:781px;top:863px;letter-spacing:-0.113px;">North Stairs</div>
<div class="t c" style="left:1163px;top:863px;letter-spacing:-0.174px;">Grid N2</div>
<div class="row alt" style="left:7px;top:880px;width:1395px"></div>
<div class="t c" style="left:9px;top:881px;letter-spacing:0.000px;">Platform B</div>
<div class="t c" style="left:295px;top:881px;letter-spacing:-0.103px;">Ancillary Structures</div>
<div class="t c" style="left:781px;top:881px;letter-spacing:-0.313px;">South Stairs</div>
<div class="t c" style="left:1163px;top:881px;letter-spacing:-0.762px;">Grid S1</div>
<div class="row wh" style="left:7px;top:898px;width:1395px"></div>
<div class="t c" style="left:9px;top:899px;letter-spacing:0.000px;">Platform B</div>
<div class="t c" style="left:295px;top:899px;letter-spacing:-0.103px;">Ancillary Structures</div>
<div class="t c" style="left:781px;top:899px;letter-spacing:-0.313px;">South Stairs</div>
<div class="t c" style="left:1163px;top:899px;letter-spacing:-0.612px;">Grid S2</div>
<div class="a" style="left:7px;top:916px;width:1395px;height:4px;background:#f7f7f7"></div>
<div class="a" style="left:1403px;top:626px;width:15px;height:246px;background:#cdcdcd"></div>
<svg class="ic" style="left:1406px;top:615px" width="9" height="6" viewBox="0 0 9 6"><path d="M1.200 5.100L4.500 1.800L7.800 5.100" stroke="#4d4d4d" stroke-width="2" fill="none"/></svg>
<svg class="ic" style="left:1406px;top:909px" width="9" height="6" viewBox="0 0 9 6"><path d="M1.200 0.900L4.500 4.200L7.800 0.900" stroke="#4d4d4d" stroke-width="2" fill="none"/></svg>
<div class="a" style="left:1343px;top:933px;width:73px;height:23px;background:#e1e1e1;border:2px solid #0078d7"></div>
<div class="t " style="left:1365px;top:936px;letter-spacing:-0.647px;">Close</div>
</body></html>
